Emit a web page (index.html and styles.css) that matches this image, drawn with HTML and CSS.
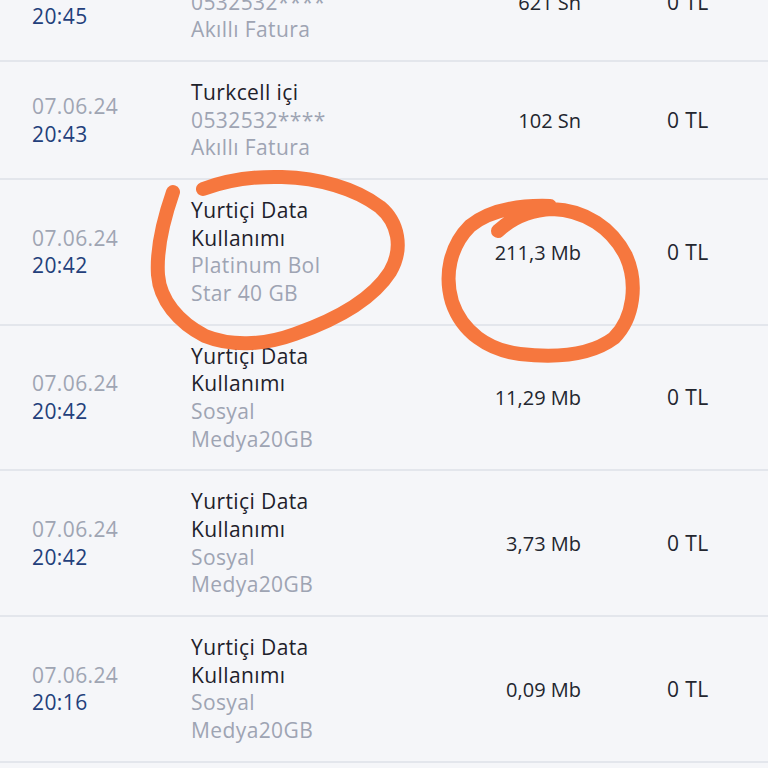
FILE: index.html
```html
<!DOCTYPE html>
<html lang="tr">
<head>
<meta charset="utf-8">
<title>Kullanım Detayı</title>
<link rel="stylesheet" href="styles.css">
</head>
<body>
<div class="screen">
  <ul class="list">
    <li class="row">
      <div class="date"><span class="day">07.06.24</span><span class="time">20:45</span></div>
      <div class="desc"><span class="title">Turkcell içi</span><span class="sub">0532532****</span><span class="sub">Akıllı Fatura</span></div>
      <div class="amount">621 Sn</div>
      <div class="cost">0 TL</div>
    </li>
    <li class="row">
      <div class="date"><span class="day">07.06.24</span><span class="time">20:43</span></div>
      <div class="desc"><span class="title">Turkcell içi</span><span class="sub">0532532****</span><span class="sub">Akıllı Fatura</span></div>
      <div class="amount">102 Sn</div>
      <div class="cost">0 TL</div>
    </li>
    <li class="row">
      <div class="date"><span class="day">07.06.24</span><span class="time">20:42</span></div>
      <div class="desc"><span class="title">Yurtiçi Data</span><span class="title">Kullanımı</span><span class="sub">Platinum Bol</span><span class="sub">Star 40 GB</span></div>
      <div class="amount">211,3 Mb</div>
      <div class="cost">0 TL</div>
    </li>
    <li class="row">
      <div class="date"><span class="day">07.06.24</span><span class="time">20:42</span></div>
      <div class="desc"><span class="title">Yurtiçi Data</span><span class="title">Kullanımı</span><span class="sub">Sosyal</span><span class="sub">Medya20GB</span></div>
      <div class="amount">11,29 Mb</div>
      <div class="cost">0 TL</div>
    </li>
    <li class="row">
      <div class="date"><span class="day">07.06.24</span><span class="time">20:42</span></div>
      <div class="desc"><span class="title">Yurtiçi Data</span><span class="title">Kullanımı</span><span class="sub">Sosyal</span><span class="sub">Medya20GB</span></div>
      <div class="amount">3,73 Mb</div>
      <div class="cost">0 TL</div>
    </li>
    <li class="row">
      <div class="date"><span class="day">07.06.24</span><span class="time">20:16</span></div>
      <div class="desc"><span class="title">Yurtiçi Data</span><span class="title">Kullanımı</span><span class="sub">Sosyal</span><span class="sub">Medya20GB</span></div>
      <div class="amount">0,09 Mb</div>
      <div class="cost">0 TL</div>
    </li>
    <li class="row">
      <div class="date"><span class="day">07.06.24</span><span class="time">20:16</span></div>
      <div class="desc"><span class="title">Yurtiçi Data</span><span class="title">Kullanımı</span><span class="sub">Sosyal</span><span class="sub">Medya20GB</span></div>
      <div class="amount">0,02 Mb</div>
      <div class="cost">0 TL</div>
    </li>
  </ul>
  <svg class="marks" width="768" height="768" viewBox="0 0 768 768" aria-hidden="true">
    <path d="M173 192 C165 215 156 245 158 275 C160 300 178 322 205 336 C230 346 262 346 295 334 C335 320 372 300 390 272 C404 248 398 222 380 207 C355 188 318 178 282 177 C250 176 222 182 203 189"
          fill="none" stroke="#f6773e" stroke-width="14" stroke-linecap="round" stroke-linejoin="round"/>
    <path d="M498 231 C512 218 530 210 552 209 C585 210 612 228 626 256 C638 283 634 318 614 338 C590 356 555 358 520 354 C488 350 462 332 452 302 C444 275 450 246 470 226 C490 210 520 205 550 206"
          fill="none" stroke="#f6773e" stroke-width="14" stroke-linecap="round" stroke-linejoin="round"/>
  </svg>
</div>
</body>
</html>
```
FILE: styles.css
```css
html, body {
  margin: 0;
  padding: 0;
  background: #f5f6f9;
}

.screen {
  position: relative;
  width: 768px;
  height: 768px;
  overflow: hidden;
  background: #f5f6f9;
  font-family: "Open Sans", Lato, "Noto Sans", sans-serif;
  font-size: 21px;
  letter-spacing: 0.4px;
  line-height: 27.67px;
}

.list {
  list-style: none;
  margin: -56px 0 0 0;
  padding: 0;
}

.row {
  display: grid;
  grid-template-columns: 159px 1fr 246px 101px;
  align-items: center;
  padding: 17px 0 16px 32px;
  border-bottom: 2px solid #e3e6ec;
}

.date,
.desc {
  display: flex;
  flex-direction: column;
}

.day {
  color: #9fa5b3;
}

.time {
  color: #233f7b;
}

.title {
  color: #1e212b;
}

.sub {
  color: #9ea4b3;
}

.amount {
  text-align: right;
  padding-right: 86px;
  font-size: 20px;
  letter-spacing: 0;
  color: #23262f;
}

.cost {
  color: #23262f;
}

.marks {
  position: absolute;
  left: 0;
  top: 0;
  pointer-events: none;
}
```
